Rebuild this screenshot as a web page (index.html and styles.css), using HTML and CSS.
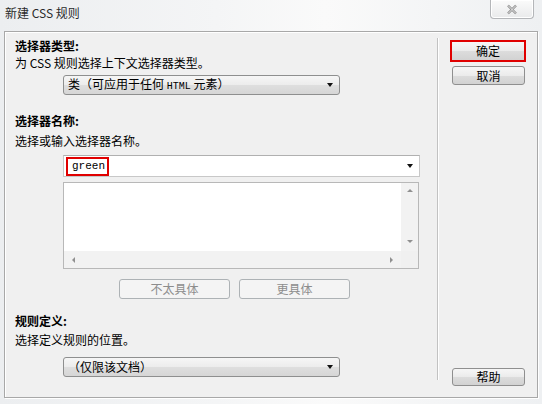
FILE: index.html
```html
<!DOCTYPE html>
<html>
<head>
<meta charset="utf-8">
<link rel="stylesheet" href="styles.css">
</head>
<body>
<div class="window">
  <div class="titlebar">
    <span class="title">新建 CSS 规则</span>
    <div class="close"><svg width="12" height="11" viewBox="0 0 12 11"><path d="M2 1.5 L10 9.5 M10 1.5 L2 9.5" stroke="#8a8a8a" stroke-width="2.4" fill="none"/><path d="M2 1.5 L10 9.5 M10 1.5 L2 9.5" stroke="#f4f4f4" stroke-width="0.9" fill="none"/></svg></div>
  </div>
  <div class="panel">
    <div class="left">
      <div class="h h1">选择器类型:</div>
      <div class="d">为 CSS 规则选择上下文选择器类型。</div>
      <div class="select s1"><span>类（可应用于任何 <span class="mono">HTML</span> 元素）</span><i class="arrow"></i></div>

      <div class="h h2">选择器名称:</div>
      <div class="d d2">选择或输入选择器名称。</div>
      <div class="combo"><span class="hl">green</span><i class="arrow"></i></div>
      <div class="list">
        <div class="list-main">
          <div class="list-area"></div>
          <div class="vbar"><i class="up"></i><i class="down"></i></div>
        </div>
        <div class="hbar"><div class="htrack"><i class="lt"></i><i class="rt"></i></div><div class="corner"></div></div>
      </div>
      <div class="btnrow">
        <div class="btn dis">不太具体</div>
        <div class="btn dis">更具体</div>
      </div>

      <div class="h h3">规则定义:</div>
      <div class="d d3">选择定义规则的位置。</div>
      <div class="select s3"><span>（仅限该文档）</span><i class="arrow"></i></div>
    </div>
    <div class="divider"></div>
    <div class="right">
      <div class="btn side ok">确定</div>
      <div class="btn side cancel">取消</div>
      <div class="btn side help">帮助</div>
    </div>
  </div>
</div>
</body>
</html>
```

FILE: styles.css
```css
html, body {
  margin: 0;
  padding: 0;
}
body {
  width: 542px;
  height: 404px;
  overflow: hidden;
  font-family: "Noto Sans CJK SC", "Liberation Sans", sans-serif;
  font-size: 12px;
  color: #000;
  background: #eef0f2;
}
.window {
  width: 542px;
  height: 404px;
  display: flex;
  flex-direction: column;
  background: linear-gradient(90deg, #eceef0 0%, #f4f5f6 40%, #fafafa 60%, #eef0f2 100%);
}
.titlebar {
  height: 31px;
  display: flex;
  align-items: flex-start;
  justify-content: space-between;
  flex: none;
}
.title {
  margin: 4px 0 0 5px;
  font-size: 12px;
  line-height: 18px;
  color: #2a2a2a;
}
.close {
  width: 42px;
  height: 18px;
  margin-right: 8px;
  border: 1px solid #b4b6b9;
  border-top: none;
  border-radius: 0 0 4px 4px;
  background: linear-gradient(#fbfbfb, #e9eaeb);
  box-shadow: inset 0 0 0 1px #fff;
  display: flex;
  align-items: center;
  justify-content: center;
}
.panel {
  margin: 0 4px 6px 4px;
  height: 365px;
  border: 1px solid #a8a8a8;
  box-shadow: inset 1px 1px 0 #ffffff, 1px 1px 0 #ffffff;
  background: #f0f0f0;
  display: flex;
  flex: none;
}
.left {
  width: 422px;
  padding-left: 10px;
  display: flex;
  flex-direction: column;
  align-items: flex-start;
}
.h {
  font-weight: bold;
  line-height: 16px;
  height: 16px;
}
.d {
  line-height: 16px;
  height: 16px;
}
.h1 { margin-top: 6px; }
.d { margin-top: 1px; }
.d2 { margin-top: 4px; }
.d3 { margin-top: 3px; }
.h2 { margin-top: 18px; }
.h3 { margin-top: 14px; }
.mono {
  font-family: "Liberation Mono", monospace;
  font-size: 10px;
}
.select {
  box-sizing: border-box;
  margin-left: 48px;
  width: 277px;
  height: 20px;
  border: 1px solid #8e8f8f;
  border-radius: 3px;
  background: linear-gradient(#f6f6f6 0%, #ececec 50%, #dedede 52%, #d6d6d6 100%);
  display: flex;
  align-items: center;
  justify-content: space-between;
  padding: 0 6px 0 4px;
  line-height: 16px;
}
.s1 { margin-top: 4px; }
.s3 { margin-top: 9px; }
.arrow {
  width: 0;
  height: 0;
  border-left: 3.5px solid transparent;
  border-right: 3.5px solid transparent;
  border-top: 4px solid #111;
}
.combo {
  box-sizing: border-box;
  margin: 6px 0 0 48px;
  width: 357px;
  height: 22px;
  border: 1px solid #c8c8c8;
  border-top-color: #b0b0b0;
  background: #fff;
  display: flex;
  align-items: center;
  justify-content: space-between;
  padding: 0 6px 0 2px;
}
.hl {
  box-sizing: border-box;
  height: 19px;
  width: 43px;
  border: 2px solid #e00000;
  font-family: "Liberation Mono", monospace;
  font-size: 11px;
  line-height: 15px;
  padding-left: 4px;
}
.list {
  box-sizing: border-box;
  margin: 5px 0 0 48px;
  width: 356px;
  height: 87px;
  border: 1px solid #b8b8b8;
  background: #fff;
  display: flex;
  flex-direction: column;
}
.list-main {
  flex: 1;
  display: flex;
}
.list-area { flex: 1; }
.vbar {
  width: 17px;
  background: #f2f2f2;
  display: flex;
  flex-direction: column;
  align-items: center;
  justify-content: space-between;
  padding: 6px 0 8px;
  box-sizing: border-box;
}
.up {
  width: 0; height: 0;
  border-left: 3px solid transparent;
  border-right: 3px solid transparent;
  border-bottom: 3px solid #909090;
}
.down {
  width: 0; height: 0;
  border-left: 3px solid transparent;
  border-right: 3px solid transparent;
  border-top: 3px solid #909090;
}
.hbar {
  height: 17px;
  display: flex;
  background: #f2f2f2;
}
.htrack {
  flex: 1;
  display: flex;
  align-items: center;
  justify-content: space-between;
  padding: 0 8px 0 8px;
}
.lt {
  width: 0; height: 0;
  border-top: 3px solid transparent;
  border-bottom: 3px solid transparent;
  border-right: 3px solid #909090;
}
.rt {
  width: 0; height: 0;
  border-top: 3px solid transparent;
  border-bottom: 3px solid transparent;
  border-left: 3px solid #909090;
}
.corner {
  width: 17px;
  background: #f0f0f0;
}
.btnrow {
  margin: 10px 0 0 104px;
  display: flex;
  gap: 9px;
}
.btn {
  box-sizing: border-box;
  height: 20px;
  border: 1px solid #8f8f8f;
  border-radius: 3px;
  background: linear-gradient(#f6f6f6 0%, #ebebeb 50%, #dcdcdc 52%, #d2d2d2 100%);
  display: flex;
  align-items: center;
  justify-content: center;
  line-height: 16px;
}
.btn.dis {
  width: 111px;
  border-color: #adb2b5;
  background: #f4f4f4;
  color: #8d8d8d;
}
.divider {
  margin: 6px 0 17px 0;
  width: 1px;
  background: #c2c2c2;
  box-shadow: 1px 0 0 #ffffff;
}
.right {
  margin-left: 14px;
  display: flex;
  flex-direction: column;
  padding: 8px 0 11px;
}
.side {
  width: 73px;
}
.ok {
  height: 22px;
  border: 2px solid #e00000;
  border-radius: 0;
  width: 76px;
  margin-left: -2px;
}
.cancel {
  margin-top: 4px;
  height: 19px;
}
.help {
  margin-top: auto;
  height: 18px;
}
```
